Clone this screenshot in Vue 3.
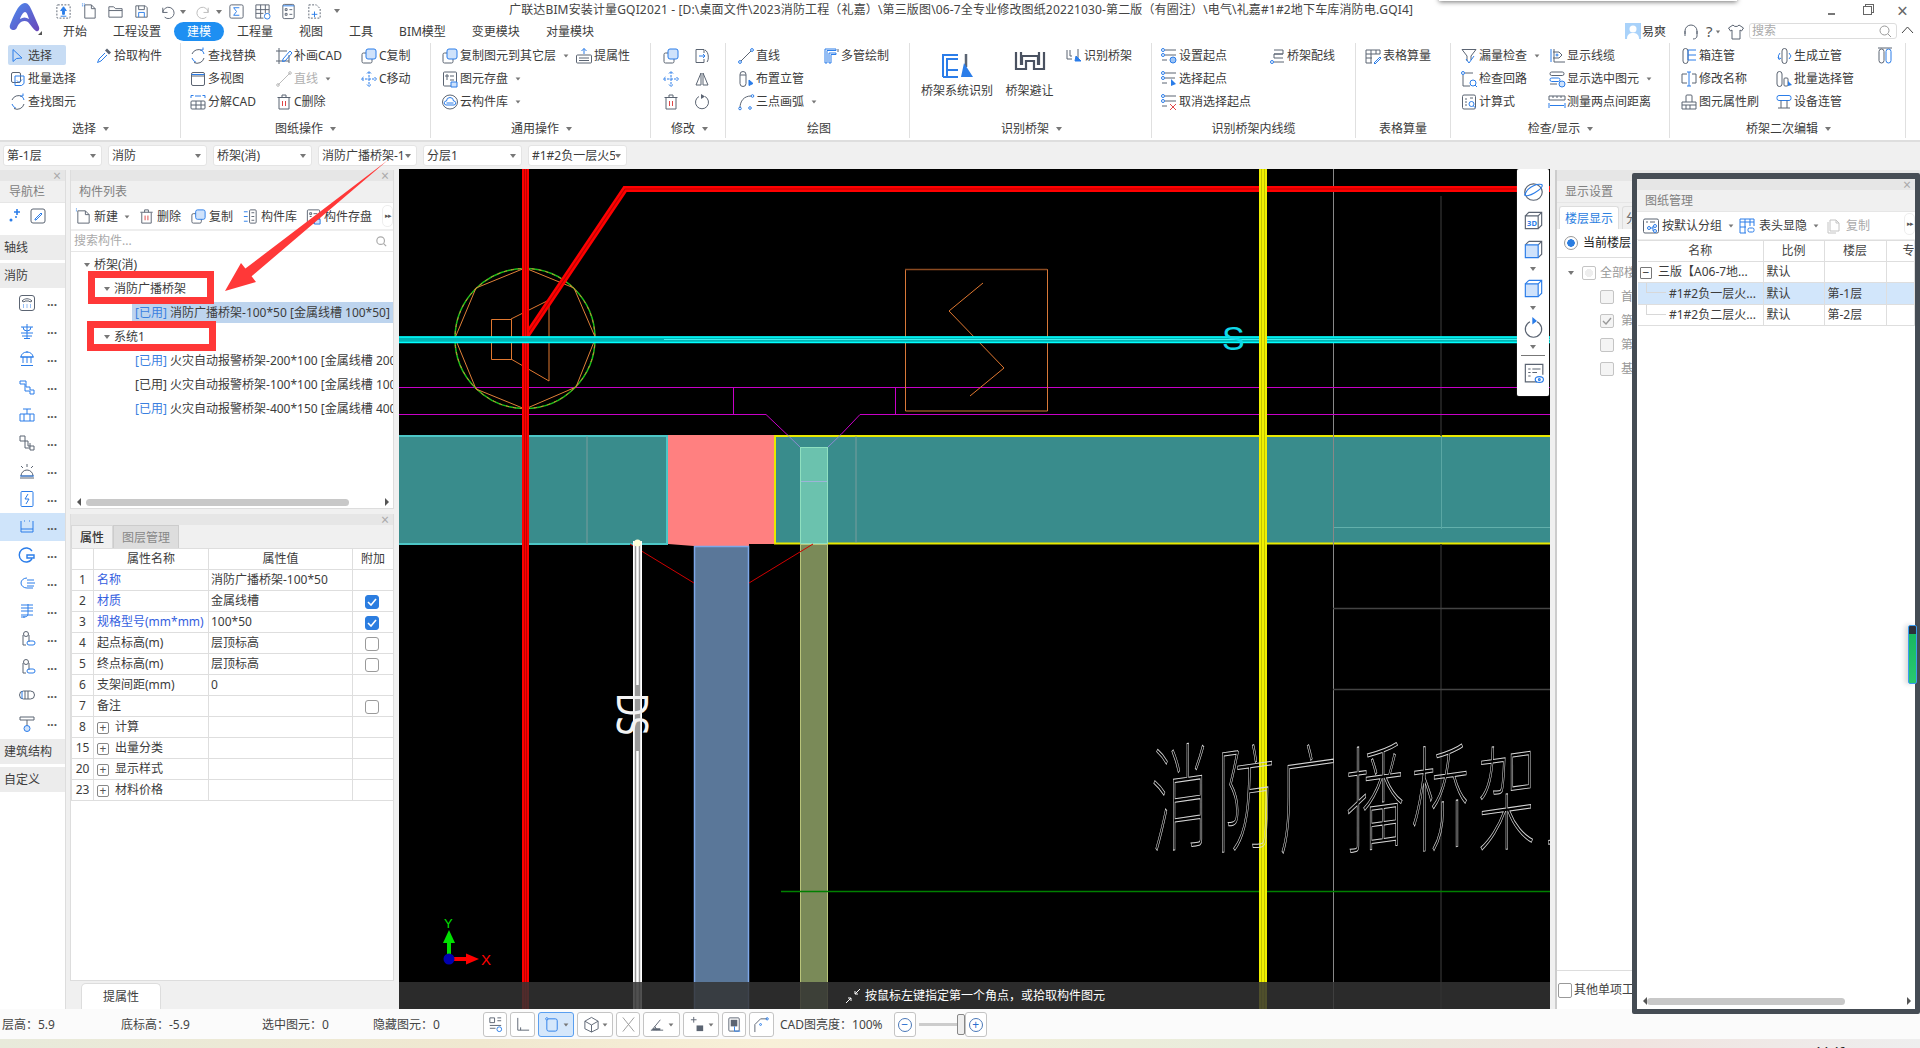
<script setup>
const b = 'stroke="#2b7de9"'
const r = 'stroke="#e04848"'
const lb = 'fill="#cfe2fb"'
const d = 'fill="#5b6472" stroke="none"'

const icons = {
  select: `<path ${b} d="M4 2.5v12l3.5-3 5.5-.5z"/>`,
  pick: `<path ${d} d="M12 1.5l4 4-2 2-4-4z"/><path ${b} d="M10 6l-6 6-1.5 3.5L6 14l6-6"/>`,
  batch: `<rect x="2.5" y="2.5" width="9" height="10" rx="1.5"/><path ${b} d="M6 6h9v7.5l-2.5 2H6z"/><path ${b} d="M8 10.5l2 2 3-3"/>`,
  find: `<path d="M13 3.5A7 7 0 0 0 3 7"/><path ${b} d="M3 11a7 7 0 0 0 4 4.3"/><path d="M5 15.5A7 7 0 0 0 15 11"/><path ${b} d="M15 7a7 7 0 0 0-2-3.5M11 3h3V.5"/>`,
  patch: `<path d="M1 4h11M4 1v16M1 14h13M14 8v8"/><path ${b} d="M8 12l7-8 2 2-7 8-2.500.5z"/>`,
  multi: `<rect x="2.5" y="2.5" width="13" height="13" rx="1.500"/><path d="M2.500 6h13"/><path ${b} d="M2.500 4.500h13"/>`,
  lineOff: `<path stroke="#bbb" d="M3 15L15 3"/><circle stroke="#bbb" cx="3" cy="15" r="1.300"/><circle stroke="#bbb" cx="15" cy="3" r="1.300"/>`,
  line: `<path d="M4 14L14 4"/><circle ${b} cx="3" cy="15" r="1.400"/><circle ${b} cx="15" cy="3" r="1.400"/>`,
  copyB: `<rect x="2" y="6" width="10" height="10" rx="1.500"/><rect ${b} ${lb} x="6" y="2" width="10" height="10" rx="2"/>`,
  move: `<path ${b} d="M9 1.500v15M1.500 9h15M7 3.500l2-2 2 2M7 14.500l2 2 2-2M3.500 7l-2 2 2 2M14.500 7l2 2-2 2" stroke-dasharray="2.500 1"/>`,
  explode: `<path ${b} d="M2 5V2.500h2.500M16 5V2.500h-2.500M6 3h6"/><rect x="2" y="8" width="14" height="8" rx="1"/><path d="M7 8v8M12 8v8M2 12h14"/>`,
  trash: `<path d="M4 5v11h10V5M2.500 4.500h13M7 4.500V2h4v2.500"/><path ${r} d="M7.500 8v5M10.500 8v5"/>`,
  save: `<rect x="2.500" y="2" width="13" height="14" rx="1"/><path d="M5 5h2v2H5zM9 6h4M5 9h2M9 10h4"/><path ${b} ${lb} d="M10 12h6v5h-6z"/>`,
  cloud: `<ellipse cx="9" cy="9" rx="7.500" ry="7"/><path ${b} d="M5 12a2 2 0 0 1 .500-4 3.500 3.500 0 0 1 7 0 2 2 0 0 1 .500 4zM5.500 10h7"/>`,
  lift: `<rect x="1.500" y="8" width="15" height="8" rx="1"/><path d="M4 11h10M4 13.500h10"/><path ${b} d="M9 7V1.500M6.500 4L9 1.500 11.500 4"/>`,
  mirror: `<path d="M8 3L3 15h5zM10 3l5 12h-5z"/>`,
  flip: `<path d="M3 2.500h8V6M3 2.500v13h8V12"/><path ${b} d="M6 9h6M10 7l2 2-2 2"/><path d="M12 3c4 2 4 10 2 12"/>`,
  turn: `<path d="M12 3.500a6.500 6.500 0 1 1-6 0"/><path ${d} d="M8 1l4 2.500L8 6z"/>`,
  riser: `<rect x="3" y="1.500" width="6" height="15" rx="3"/><path d="M3 5h6"/><path ${b} fill="#2b7de9" d="M12 10l4 3.500-4 2z"/>`,
  arc: `<path d="M3 15C3 8 7 3 14 3"/><circle ${b} cx="3" cy="15.500" r="1.300"/><circle ${b} cx="15.500" cy="3" r="1.300"/><circle ${b} cx="13" cy="15" r="1.300"/>`,
  multipipe: `<path ${b} d="M3 2h11v1.500H5V16H3zM7 6h7v1.500H9V16H7z"/><path d="M16 2v3"/>`,
  bridgeBig: `<path stroke="#2b7de9" stroke-width="2" d="M4 29V7h15M8 29V11h11M4 29h15M9 22h10"/><path stroke="#5b6472" stroke-width="2.500" d="M27 6v13"/><path fill="#2b7de9" stroke="none" d="M25 15l9 14H22z"/>`,
  avoidBig: `<path stroke="#4a5261" stroke-width="2.200" d="M4 4v17h10v-8h8v8h10V4M9 4v12h1v-8h16v8h1V4"/>`,
  recog: `<path d="M2 3v9h5M5 3v6h2"/><path d="M13 2v10"/><path ${b} fill="#2b7de9" d="M11 9l5 5h-6z"/>`,
  startSet: `<circle ${b} cx="3" cy="3" r="1.500"/><path d="M5 3h11M5 8h11M2 13h5"/><circle ${b} cx="3" cy="8" r="1.500"/><circle ${b} fill="#9cc3f5" cx="13" cy="13" r="3"/>`,
  startPick: `<circle ${b} cx="3" cy="3" r="1.500"/><path d="M5 3h11M5 8h10M2 13h5"/><circle ${b} cx="3" cy="8" r="1.500"/><path fill="#2b7de9" stroke="none" d="M11 9l5 5-5 2z"/>`,
  startOff: `<circle ${b} cx="3" cy="3" r="1.500"/><path d="M5 3h11M5 8h11M2 13h5"/><circle ${b} cx="3" cy="8" r="1.500"/><path ${r} d="M10 11l6 6M16 11l-6 6"/>`,
  wire: `<path d="M6 3h9v4H6M15 7H6v4h9"/><circle ${b} cx="4" cy="15" r="1.500"/><path d="M6 15h10"/>`,
  grid: `<path d="M2 3h14v4M2 3v13h6M2 7h14M2 11h6M7 3v13M12 3v4"/><path ${b} d="M10 16l6-6 1 1-6 6z"/>`,
  funnel: `<path d="M2 2.500h14L11 9v4"/><path d="M2 2.500L7 9v5"/><path ${b} d="M6 12l3 4 5-7"/>`,
  loop: `<circle ${b} cx="3" cy="3" r="1.500"/><path d="M5 3h8M3 5v11h7"/><circle ${b} cx="13" cy="13" r="3"/><path ${b} d="M15 15l2 2"/>`,
  calc: `<rect x="2.500" y="2" width="13" height="14" rx="1.500"/><path d="M5 6h2M5 9h2M5 12h2M10 5h3"/><circle ${b} cx="11.500" cy="11" r="2.500"/><path ${b} d="M13.500 13l2 2"/>`,
  wires: `<path ${b} d="M3 2v13"/><path d="M6 2v13h11M5 5h6l3 3-3 3H5"/><circle ${b} cx="9" cy="8" r="1"/>`,
  showSel: `<rect x="2" y="2" width="14" height="3.500" rx="1.700"/><rect ${b} x="2" y="8" width="10" height="3.500" rx="1.700"/><path d="M2 14h7"/><circle ${b} ${lb} cx="14" cy="14" r="3"/>`,
  measure: `<path d="M1 3h16v4H1zM5 3v2M9 3v2M13 3v2"/><path ${b} d="M1 10v5M17 10v5M2 12.500h14"/>`,
  box: `<rect x="3" y="1.500" width="5" height="15" rx="2.500"/><path ${b} d="M8 3h8M8 8h8M8 13h8M8 3v10"/>`,
  rename: `<path d="M7 4H2v9h5M12 4h4v9h-4"/><path ${b} d="M9 2v14M7 2h4M7 16h4"/>`,
  brush: `<path d="M6 9V3a1 1 0 0 1 1-1h4a1 1 0 0 1 1 1v6"/><path d="M2 9h14v7H2zM2 12h14M6 12v4M10 12v4"/>`,
  gen: `<rect x="7" y="1.500" width="5" height="15" rx="2.500"/><path ${b} d="M5 6a5 5 0 0 0-1 6M3 10l1 2.500 2-1.500"/><path ${b} d="M14 6l2 3-2 3"/>`,
  batchP: `<rect x="2" y="1.500" width="5" height="15" rx="2.500"/><rect x="9" y="8" width="4" height="8" rx="1"/><path fill="#2b7de9" stroke="none" d="M13 11l4 4-4 1z"/>`,
  equip: `<rect ${b} x="2" y="2.500" width="14" height="5" rx="2"/><path d="M6 7.500V15M12 7.500V15M3 15h12"/>`,
  pipe2: `<rect x="2" y="2" width="5" height="14" rx="2.500"/><rect ${b} x="9" y="2" width="5" height="14" rx="2.500"/><path d="M1 1h14"/>`,
  phone: `<rect x="1.500" y="1.500" width="15" height="15" rx="2.500"/><path d="M4 7c3-3 7-3 10 0l-2 1-1-1H7L6 8z"/><path ${b} d="M5 11h1M8.500 11h1M12 11h1M5 13h1M8.500 13h1M12 13h1"/>`,
  np1: `<path ${b} d="M3 5h12M9 2v14M5 5a4 4 0 0 0 8 0M3 11h12M4 14h10M6 16.500h6"/>`,
  np2: `<path ${b} d="M3 7a6 5 0 0 1 12 0zM2 7h14M5 7v6M13 7v6M9 7v6M3 15.500h12M9 1v2"/>`,
  np3: `<path ${b} d="M2 3h6v6h4v3h4v4h-4v-3H7V6H2z"/>`,
  np4: `<path ${b} d="M5 3h8M9 3v5M2 8h14v7H2zM6 8v7M12 8v7"/>`,
  np5: `<path d="M2 2h5v5h3v5h6v4h-4v-2H7V7H2z"/><path d="M12 9v5"/>`,
  np6: `<path d="M3 14a6 6 0 0 1 12 0zM2 16h14M9 2v3M3 4l2 2M15 4l-2 2"/><path ${b} d="M2 14h14"/>`,
  np7: `<rect ${b} x="3" y="1.500" width="12" height="15" rx="1"/><path ${b} d="M10 4L7 9h4l-3 5"/>`,
  np8: `<path ${b} d="M3 3v3M3 6v8h12V3M3 11h12M6 3h1M11 3h1"/>`,
  np9: `<path ${b} d="M14 5A7 7 0 1 0 14 13M9 9h7v3H9z" stroke-width="1.400"/>`,
  np10: `<path ${b} d="M9 4a6 5 0 1 0 0 10h6M9 6h7M9 9h8M9 12h7"/>`,
  np11: `<path ${b} d="M3 3h12M3 6h12M3 9h12M10 2v10c0 3-3 3-5 3M3 13h12M3 15h4"/>`,
  np12: `<circle cx="8" cy="4" r="2.500"/><path d="M5 5v10h3M11 5v7"/><rect ${b} x="9" y="11" width="8" height="4" rx="2"/>`,
  np14: `<rect x="1.500" y="5" width="15" height="8" rx="4"/><path d="M7 5v8M10 5v8"/><path ${b} d="M4 5v8"/>`,
  np15: `<path d="M2 3h14v3H2zM9 6v6"/><circle ${b} ${lb} cx="9" cy="14.500" r="3"/>`
}

const qa = [
  { k: `<rect stroke-dasharray="2 1.500" x="2" y="2" width="14" height="14" rx="1"/><path ${b} fill="#2b7de9" d="M9 4l3 4h-2v4H8V8H6z"/><path ${b} d="M6 14h6"/>` },
  { k: `<path d="M4 2h7l4 4v10H4zM11 2v4h4"/><path ${b} d="M1 1h3M1 3h3" stroke-dasharray="1 1"/>` },
  { k: `<path d="M2 15V4h5l2 2h7v9zM2 8h14"/>` },
  { k: `<path d="M3 3h10l2 2v10H3zM6 3v4h6V3"/><path ${b} d="M6 15v-5h6v5"/>` },
  { k: `<path d="M4 5v5h5M4 10a6 6 0 1 1 2 5"/>`, caret: true },
  { k: `<path stroke="#bbb" d="M14 5v5H9M14 10a6 6 0 1 0-2 5"/>`, caret: true, off: true, gap: true },
  { k: `<rect x="2" y="2" width="14" height="14" rx="1.500"/><path ${b} d="M12 5H6l3 4-3 4h6"/>`, gap2: true },
  { k: `<path d="M2 2h14v9M2 2v14h8M2 7h14M2 11h8M7 2v14M12 2v9"/><circle ${b} cx="14" cy="14" r="3"/>` },
  { k: `<rect x="3" y="1.500" width="12" height="15" rx="1.500"/><path ${b} d="M3 3h12"/><path d="M5.500 6h2v2h-2zM5.500 11h2v2h-2zM10 7h3M10 12h3"/>` },
  { k: `<path stroke-dasharray="2 1.500" d="M3 2h8l4 4v10H3z"/><path ${b} d="M6 12h6M9 9v6"/>` }
]

const sections = [
  { label: '选择', caret: true, w: 181, pad: 9, cols: [
    { w: 86, items: [{ ic: 'select', t: '选择', active: true }, { ic: 'batch', t: '批量选择' }, { ic: 'find', t: '查找图元' }] },
    { items: [{ ic: 'pick', t: '拾取构件' }] }
  ] },
  { label: '图纸操作', caret: true, w: 250, pad: 8, cols: [
    { w: 86, items: [{ ic: 'find', t: '查找替换' }, { ic: 'multi', t: '多视图' }, { ic: 'explode', t: '分解CAD' }] },
    { w: 85, items: [{ ic: 'patch', t: '补画CAD' }, { ic: 'lineOff', t: '直线', off: true, caret: true }, { ic: 'trash', t: 'C删除' }] },
    { items: [{ ic: 'copyB', t: 'C复制' }, { ic: 'move', t: 'C移动' }] }
  ] },
  { label: '通用操作', caret: true, w: 220, pad: 10, cols: [
    { w: 134, items: [{ ic: 'copyB', t: '复制图元到其它层', caret: true }, { ic: 'save', t: '图元存盘', caret: true }, { ic: 'cloud', t: '云构件库', caret: true }] },
    { items: [{ ic: 'lift', t: '提属性' }] }
  ] },
  { label: '修改', caret: true, w: 75, pad: 11, cols: [
    { w: 31, items: [{ ic: 'copyB' }, { ic: 'move' }, { ic: 'trash' }] },
    { items: [{ ic: 'flip' }, { ic: 'mirror' }, { ic: 'turn' }] }
  ] },
  { label: '绘图', w: 184, pad: 11, cols: [
    { w: 85, items: [{ ic: 'line', t: '直线' }, { ic: 'riser', t: '布置立管' }, { ic: 'arc', t: '三点画弧', caret: true }] },
    { items: [{ ic: 'multipipe', t: '多管绘制' }] }
  ] },
  { label: '识别桥架', caret: true, w: 242, pad: 10, cols: [
    { w: 74, big: { ic: 'bridgeBig', t: '桥架系统识别' } },
    { w: 71, big: { ic: 'avoidBig', t: '桥架避让' } },
    { items: [{ ic: 'recog', t: '识别桥架' }] }
  ] },
  { label: '识别桥架内线缆', w: 204, pad: 8, cols: [
    { w: 108, items: [{ ic: 'startSet', t: '设置起点' }, { ic: 'startPick', t: '选择起点' }, { ic: 'startOff', t: '取消选择起点' }] },
    { items: [{ ic: 'wire', t: '桥架配线' }] }
  ] },
  { label: '表格算量', w: 95, pad: 8, cols: [{ items: [{ ic: 'grid', t: '表格算量' }] }] },
  { label: '检查/显示', caret: true, w: 219, pad: 9, cols: [
    { w: 88, items: [{ ic: 'funnel', t: '漏量检查', caret: true }, { ic: 'loop', t: '检查回路' }, { ic: 'calc', t: '计算式' }] },
    { items: [{ ic: 'wires', t: '显示线缆' }, { ic: 'showSel', t: '显示选中图元', caret: true }, { ic: 'measure', t: '测量两点间距离' }] }
  ] },
  { label: '桥架二次编辑', caret: true, w: 236, pad: 10, cols: [
    { w: 95, items: [{ ic: 'box', t: '箱连管' }, { ic: 'rename', t: '修改名称' }, { ic: 'brush', t: '图元属性刷' }] },
    { w: 102, items: [{ ic: 'gen', t: '生成立管' }, { ic: 'batchP', t: '批量选择管' }, { ic: 'equip', t: '设备连管' }] },
    { items: [{ ic: 'pipe2' }] }
  ] }
]

const tabs = ['开始', '工程设置', '建模', '工程量', '视图', '工具', 'BIM模型', '变更模块', '对量模块']
const combos = ['第-1层', '消防', '桥架(消)', '消防广播桥架-1', '分层1', '#1#2负一层火5']

const navIcons = ['phone', 'np1', 'np2', 'np3', 'np4', 'np5', 'np6', 'np7', 'np8', 'np9', 'np10', 'np11', 'np12', 'np12', 'np14', 'np15']

const tools = [
  { ic: 'new', t: '新建', caret: true },
  { ic: 'trash', t: '删除' },
  { ic: 'copyB', t: '复制' },
  { ic: 'lib', t: '构件库' },
  { ic: 'save', t: '构件存盘' }
]
icons.new = `<path d="M3 3h8l4 4v9H3zM11 3v4h4"/><path ${b} d="M1 1h2M1 3h2" stroke-dasharray="1 1"/>`
icons.lib = `<rect x="8" y="2" width="7" height="14" rx="1"/><path d="M10 5h3M10 9h3M10 13h3"/><path ${b} d="M2 4h4M2 9h4M2 14h4"/>`
icons.group = `<rect x="1.500" y="2" width="15" height="14" rx="1.500"/><path d="M4 5h2M8 5h5"/><path ${b} d="M8 11h3M11 9v5"/><circle ${b} cx="7" cy="11" r="1.500"/><circle ${b} cx="13" cy="9" r="1.500"/><circle ${b} cx="13" cy="14" r="1.500"/>`
icons.head = `<path ${b} d="M2 2h14v3H2zM2 5v11h6M16 5v4M7 2v14M12 2v7M2 10h6"/><rect ${b} x="10" y="11" width="6" height="4" rx="1.500"/>`
icons.cp = `<path stroke="#c4c4c4" d="M3 5v11h8M5 3h6l3 3v8H5zM11 3v3h3"/>`
icons.globe = `<ellipse cx="9" cy="9.500" rx="7.500" ry="7"/><path ${b} d="M1.500 12C3 15 17 7 16.500 3.500 15.500 1.500 4 3.500 1.500 12z"/>`
icons.c3d = `<path d="M2 5h11v11H2zM2 5l3-3h11v11l-3 3M13 5l3-3"/><text x="3.500" y="13.500" font-size="6.500" font-weight="700" stroke="none" fill="#2b7de9" font-family="Noto Sans">3D</text>`
icons.cube = `<path d="M5 2h11v11l-3 3M13 5l3-3M5 2L2 5"/><path ${b} ${lb} d="M2 5h11v11H2z"/>`
icons.cubeB = `<path ${b} d="M5 2h11v11l-3 3M13 5l3-3M5 2L2 5"/><path ${b} ${lb} d="M2 5h11v11H2z"/>`
icons.rot = `<path d="M12 4a7 7 0 1 1-6 0"/><path fill="#2b7de9" stroke="none" d="M8 0l4 3.500-4 3z"/>`
icons.note = `<path d="M17 11V2H2v15h10M4.500 6h2M8 6h7M4.500 9h2M8 9h4M4.500 12h2"/><ellipse ${b} cx="14" cy="15" rx="3.500" ry="2.500"/><circle ${b} cx="14" cy="15" r=".800"/>`
icons.st1 = `<path d="M3 2h5v5H3zM11 2h4M11 5h4M3 10h12M3 13h6"/><circle ${b} cx="13" cy="14" r="2.500"/>`
icons.st2 = `<path d="M4 2v13h12"/><path d="M7 12v3"/>`
icons.st3 = `<rect ${b} x="3" y="3" width="11" height="13" rx="2"/><circle ${b} fill="#fff" cx="3" cy="3" r="1.200"/>`
icons.st4 = `<path d="M9 1.500l7 4v8l-7 3.500-7-3.500v-8zM2 5.500l7 4 7-4M9 9.500V17"/>`
icons.st5 = `<path stroke="#999" d="M3 1.500l12 15M15 1.500l-12 15"/>`
icons.st6 = `<path d="M3 15L12 4M2 15h13"/><path d="M8 15a7 7 0 0 0-2-4"/><path ${d} d="M4 13h8v2H4z"/>`
icons.st7 = `<path d="M2 4h6M5 1v6"/><path ${d} d="M8 10h7v6H8z"/>`
icons.st8 = `<rect x="3" y="2" width="11" height="14" rx="1"/><path ${d} d="M5 4h7v7H5z"/><path ${b} d="M9 11v5h6"/>`
icons.st9 = `<path d="M2 17V9l6-6h7"/><circle ${b} cx="15" cy="3" r="1.200"/><circle ${b} cx="8" cy="9" r="1"/>`

const statusBtns = [
  { ic: 'st1', w: 24 },
  { ic: 'st2', w: 25 },
  { ic: 'st3', w: 36, caret: true, on: true },
  { ic: 'st4', w: 36, caret: true },
  { ic: 'st5', w: 24 },
  { ic: 'st6', w: 37, caret: true },
  { ic: 'st7', w: 36, caret: true },
  { ic: 'st8', w: 24 },
  { ic: 'st9', w: 25 }
]

const treeRows = [
  { tag: true, text: '火灾自动报警桥架-200*100 [金属线槽 200*100]' },
  { tag: false, text: '火灾自动报警桥架-100*100 [金属线槽 100*100]' },
  { tag: true, text: '火灾自动报警桥架-400*150 [金属线槽 400*150]' }
]

const props = [
  { n: 1, name: '名称', val: '消防广播桥架-100*50', blue: true },
  { n: 2, name: '材质', val: '金属线槽', blue: true, chk: 1 },
  { n: 3, name: '规格型号(mm*mm)', val: '100*50', blue: true, chk: 1 },
  { n: 4, name: '起点标高(m)', val: '层顶标高', chk: 0 },
  { n: 5, name: '终点标高(m)', val: '层顶标高', chk: 0 },
  { n: 6, name: '支架间距(mm)', val: '0' },
  { n: 7, name: '备注', val: '', chk: 0 },
  { n: 8, name: '计算', val: '', plus: true },
  { n: 15, name: '出量分类', val: '', plus: true },
  { n: 20, name: '显示样式', val: '', plus: true },
  { n: 23, name: '材料价格', val: '', plus: true }
]

const viewTools = [
  { ic: 'globe' }, { ic: 'c3d' }, { ic: 'cube', caret: true }, { ic: 'cubeB', caret: true }, { ic: 'rot', caret: true, line: true }, { ic: 'note' }
]

const floors = [{ t: '首' }, { t: '第', on: true }, { t: '第' }, { t: '基' }]
const sheets = [
  { name: '#1#2负一层火...', scale: '默认', floor: '第-1层', sel: true },
  { name: '#1#2负二层火...', scale: '默认', floor: '第-2层' }
]

// CAD里的大字：每个字单独倾斜，基线保持水平
const bigText = [
  { c: '消', x: 1151 }, { c: '防', x: 1217 }, { c: '广', x: 1279 }, { c: '播', x: 1346 },
  { c: '桥', x: 1411 }, { c: '架', x: 1478 }, { c: '1', x: 1543 }
]
</script>

<template>
  <div class="app">
    <header class="top">
      <div class="logo">
        <svg width="34" height="32" viewBox="0 0 34 32">
          <defs>
            <linearGradient id="lg" x1="0" y1="0" x2="1" y2="1">
              <stop offset="0" stop-color="#4a8df0" />
              <stop offset="1" stop-color="#6b45b8" />
            </linearGradient>
          </defs>
          <path fill="url(#lg)" d="M17 1c3 0 5 3 7 8l7 16c1 3-1 5-3 4-3-2-5-6-8-9-3-2-7-1-9 2-2 2-2 6-5 6-3 0-5-2-4-5C5 16 10 1 17 1zm0 9c-2 0-4 4-5 7 3-2 6-2 9 0-1-3-2-7-4-7z" />
        </svg>
        <i class="logo-corner"></i>
      </div>
      <div class="top-rows">
        <div class="title-row">
          <div v-for="(q, i) in qa" :key="i" class="qa" :class="{ gap: q.gap, gap2: q.gap2 }">
            <svg class="ic" viewBox="0 0 18 18" v-html="q.k"></svg>
            <i v-if="q.caret" class="caret qa-caret"></i>
          </div>
          <i class="caret qa-more"></i>
          <div class="win-btns">
            <span class="win-min"></span>
            <span class="win-res"></span>
            <span class="win-x">×</span>
          </div>
        </div>
        <div class="tab-row">
          <span v-for="t in tabs" :key="t" class="tab" :class="{ on: t === '建模' }">{{ t }}</span>
          <div class="user">
            <span class="avatar">
              <svg width="16" height="16" viewBox="0 0 16 16"><rect width="16" height="16" fill="#a9d2fa" /><circle cx="8" cy="6" r="3.500" fill="#fff" /><path d="M2 16c0-5 3-6 6-6s6 1 6 6z" fill="#fff" /></svg>
            </span>
            <span class="user-name">易爽</span>
            <svg class="ic user-ic" viewBox="0 0 18 18"><path d="M3 11V8a6 6 0 0 1 12 0v3M3 8v5M15 8v5M15 13c0 2-2 3-4 3" /></svg>
            <span class="help">?</span>
            <i class="caret help-caret"></i>
            <svg class="ic shirt" viewBox="0 0 18 18"><path d="M6 2L1.500 5 3.500 8 5 7v9h8V7l1.500 1 2-3L12 2c-1 2-5 2-6 0z" /></svg>
            <div class="top-search">
              <span>搜索</span>
              <svg width="13" height="13" viewBox="0 0 13 13" fill="none" stroke="#999"><circle cx="5.500" cy="5.500" r="4.500" /><path d="M9 9l3 3" /></svg>
            </div>
            <svg class="chev" width="13" height="8" viewBox="0 0 13 8" fill="none" stroke="#444"><path d="M1 7l5.500-6L12 7" /></svg>
          </div>
        </div>
      </div>
      <div class="app-title">广联达BIM安装计量GQI2021 - [D:\桌面文件\2023消防工程（礼嘉）\第三版图\06-7全专业修改图纸20221030-第二版（有圈注）\电气\礼嘉#1#2地下车库消防电.GQI4]</div>
      <div class="top-shadow"></div>
    </header>

    <section class="ribbon">
      <div v-for="s in sections" :key="s.label" class="rsec" :style="{ width: s.w + 'px', paddingLeft: s.pad + 'px' }">
        <div class="rcols">
          <div v-for="(c, ci) in s.cols" :key="ci" class="rcol" :style="c.w ? { width: c.w + 'px' } : null">
            <div v-if="c.big" class="rbig">
              <svg class="ic big-ic" viewBox="0 0 36 32" v-html="icons[c.big.ic]"></svg>
              <span>{{ c.big.t }}</span>
            </div>
            <template v-else>
              <div v-for="it in c.items" :key="it.ic + it.t" class="ritem" :class="{ active: it.active, off: it.off }">
                <svg class="ic" viewBox="0 0 18 18" v-html="icons[it.ic]"></svg>
                <span v-if="it.t">{{ it.t }}</span>
                <i v-if="it.caret" class="caret r-caret"></i>
              </div>
            </template>
          </div>
        </div>
        <div class="rlabel">{{ s.label }}<i v-if="s.caret" class="caret l-caret"></i></div>
      </div>
    </section>

    <div class="combos">
      <div v-for="c in combos" :key="c" class="combo">
        <span>{{ c }}</span>
        <i class="caret"></i>
      </div>
    </div>

    <main class="main">
      <aside class="nav">
        <div class="p-close"><span>×</span></div>
        <div class="p-title">导航栏</div>
        <div class="nav-tools">
          <svg class="ic" viewBox="0 0 18 18"><path stroke="#2b7de9" stroke-width="1.600" d="M10 2v6M7 5h6" /><circle cx="4" cy="13" r="1.500" fill="#2b7de9" stroke="none" /><circle cx="9" cy="10" r="1" fill="#2b7de9" stroke="none" /></svg>
          <svg class="ic" viewBox="0 0 18 18"><rect x="2" y="2" width="14" height="14" rx="2" /><path stroke="#2b7de9" d="M6 12l6-6 1 1-6 6H6z" /></svg>
        </div>
        <div class="nav-group first">轴线</div>
        <div class="nav-group mid">消防</div>
        <div v-for="(n, i) in navIcons" :key="i" class="nav-row" :class="{ on: i === 8 }">
          <svg class="ic" viewBox="0 0 18 18" v-html="icons[n]"></svg>
          <span>...</span>
        </div>
        <div class="nav-group low">建筑结构</div>
        <div class="nav-group">自定义</div>
      </aside>

      <div class="left">
        <div class="panel comp">
          <div class="p-close"><span>×</span></div>
          <div class="p-title">构件列表</div>
          <div class="comp-tools">
            <div v-for="t in tools" :key="t.t" class="ct">
              <svg class="ic" viewBox="0 0 18 18" v-html="icons[t.ic]"></svg>
              <span>{{ t.t }}</span>
              <i v-if="t.caret" class="caret"></i>
            </div>
            <span class="more">▸▸</span>
          </div>
          <div class="comp-search">
            <span>搜索构件...</span>
            <svg width="11" height="11" viewBox="0 0 13 13" fill="none" stroke="#aaa" stroke-width="1.400"><circle cx="5.500" cy="5.500" r="4.500" /><path d="M9 9l3 3" /></svg>
          </div>
          <div class="tree">
            <div class="tr lv0"><i class="tri"></i>桥架(消)</div>
            <div class="tr lv1"><i class="tri"></i>消防广播桥架</div>
            <div class="tr lv2 sel"><span class="tag">[已用]</span> 消防广播桥架-100*50 [金属线槽 100*50]</div>
            <div class="tr lv1"><i class="tri"></i>系统1</div>
            <div v-for="r in treeRows" :key="r.text" class="tr lv2">
              <span :class="{ tag: r.tag }">[已用]</span> {{ r.text }}
            </div>
          </div>
          <div class="hbar">
            <i class="arr-l"></i>
            <div class="thumb"></div>
            <i class="arr-r"></i>
          </div>
        </div>

        <div class="panel propp">
          <div class="p-close"><span>×</span></div>
          <div class="ptabs">
            <span class="ptab on">属性</span>
            <span class="ptab">图层管理</span>
          </div>
          <table class="ptable">
            <colgroup>
              <col class="c0" /><col class="c1" /><col class="c2" /><col class="c3" />
            </colgroup>
            <thead>
              <tr><th></th><th>属性名称</th><th>属性值</th><th>附加</th></tr>
            </thead>
            <tbody>
              <tr v-for="p in props" :key="p.n">
                <td class="num">{{ p.n }}</td>
                <td class="nm" :class="{ blue: p.blue }">
                  <span v-if="p.plus" class="plus">+</span>{{ p.name }}
                </td>
                <td class="val">{{ p.val }}</td>
                <td class="chk">
                  <span v-if="p.chk === 1" class="cb on">
                    <svg width="10" height="8" viewBox="0 0 10 8" fill="none" stroke="#fff" stroke-width="1.600"><path d="M1 4l3 3 5-6" /></svg>
                  </span>
                  <span v-else-if="p.chk === 0" class="cb"></span>
                </td>
              </tr>
            </tbody>
          </table>
        </div>

        <div class="pbtn-row"><button class="pbtn">提属性</button></div>
      </div>

      <div class="cad">
        <svg class="cad-svg" viewBox="399 169 1151 840" width="1151" height="840">
          <!-- 桥架块 -->
          <rect x="398" y="436" width="269" height="108" fill="#398c8c" stroke="#4cc6c6" stroke-width="2" />
          <path d="M587 436v108" stroke="#7b9d9d" />
          <path d="M668 435h107v109h-26v2h-55l-26-2z" fill="#ff8080" />
          <rect x="775" y="436" width="790" height="107.500" fill="#398c8c" stroke="#e8e800" stroke-width="2" />
          <path d="M856 436v107" stroke="#7b9d9d" />
          <path d="M1333 527.500h217" stroke="#63b0ac" />
          <path d="M787 434.500l13 12.500M841 434.500l-13 12.500" stroke="#8a8ad0" />
          <rect x="800.500" y="447.500" width="27" height="96" fill="#6bc2ae" stroke="#8fe0c0" />
          <path d="M801 481.500h26" stroke="#9cb4d8" />
          <rect x="800.500" y="544.500" width="27" height="470" fill="#7a8a58" stroke="#b9c47a" />
          <rect x="694.500" y="546.500" width="54" height="470" fill="#5a7799" stroke="#7da7e8" stroke-width="1.500" />
          <path d="M630 544l64 39M749 583l64-39" stroke="#d00000" />
          <!-- 线 -->
          <path d="M1333.500 169v840" stroke="#888" />
          <path d="M1441 196v240M1441 544v465" stroke="#2a2a2a" stroke-width="1.500" />
          <path d="M1441.500 436v60M1441.500 494v35" stroke="#5aa7a4" />
          <path d="M1333 608.500h217M1333 689.500h217" stroke="#444" stroke-width="1.500" />
          <path d="M781 891.500h769" stroke="#008000" stroke-width="1.500" />
          <!-- 紫线 -->
          <path d="M399 387.500h1151M399 414.500h367l21 20M841 434.500l19-20h690M733.500 387v27M895.500 387v27" fill="none" stroke="#c800c8" />
          <!-- 广播符号 -->
          <circle cx="525" cy="338.500" r="70" fill="none" stroke="#18c018" stroke-width="1.500" />
          <circle cx="525" cy="338.500" r="70" fill="none" stroke="#e08038" stroke-dasharray="3 4" />
          <path d="M525 268l49 20 21.500 50-19.500 49-51 22-49-20-21-51 21-50z" fill="none" stroke="#e08038" />
          <path d="M491.500 319.500h20v40h-20zM511 319l38-19v81l-38-22" fill="none" stroke="#e07830" />
          <path d="M905.500 269.500h142v141.500h-142z" fill="none" stroke="#d87838" />
          <path d="M905 269.500h142" stroke="#8a4a20" stroke-width="1.500" />
          <path d="M983 283l-34 28 55 57-34 28" fill="none" stroke="#e07830" />
          <!-- 红色桥架 -->
          <path d="M525 338L625 189H1550" fill="none" stroke="#f00" stroke-width="6" />
          <path d="M525 338L625 189H1550" fill="none" stroke="#b80000" stroke-width="1.200" />
          <rect x="522" y="169" width="7" height="840" fill="#f00" />
          <path d="M524.500 169v840M526.500 169v840" stroke="#c00000" />
          <!-- 青色桥架 -->
          <rect x="399" y="336.500" width="1151" height="6.500" fill="#00b4b4" />
          <path d="M399 337h1151M399 342.500h1151" stroke="#00ffff" stroke-width="1.500" />
          <path d="M664 339.500h886" stroke="#40f0f0" />
          <!-- 黄色 -->
          <rect x="1259" y="169" width="8" height="840" fill="#f0f000" />
          <path d="M1261.500 169v840M1264.500 169v840" stroke="#c4c400" />
          <!-- 白杆 -->
          <rect x="633" y="541" width="9" height="468" fill="#fff" />
          <path d="M635.500 541v468M639.500 541v468" stroke="#999" stroke-width="1.500" />
          <path d="M637.500 685v66" stroke="#999" stroke-width="5" />
          <circle cx="637.500" cy="543" r="3.500" fill="#ffffd8" />
          <!-- 文字 -->
          <text class="cad-s" x="1222" y="350">S</text>
          <text class="cad-ds" transform="translate(617 693) rotate(90) scale(.72 1)">DS</text>
          <text v-for="t in bigText" :key="t.c" class="cad-big" :transform="`translate(${t.x} 845) skewY(-8) scale(.5 1)`">{{ t.c }}</text>
          <!-- 坐标轴 -->
          <path d="M449 959v-20" stroke="#00e000" stroke-width="4" />
          <path d="M449 930l-6 13h12z" fill="#00e000" />
          <path d="M449 959h20" stroke="#f00" stroke-width="4" />
          <path d="M479 959l-13-5.500v11z" fill="#f00" />
          <circle cx="449" cy="959" r="5.500" fill="#0000b0" />
          <text class="axis ay" x="444" y="928">Y</text>
          <text class="axis ax" x="481" y="965">X</text>
        </svg>
        <div class="view-tools">
          <template v-for="v in viewTools" :key="v.ic">
            <svg class="ic" viewBox="0 0 18 18" v-html="icons[v.ic]"></svg>
            <i v-if="v.caret" class="caret"></i>
            <hr v-if="v.line" />
          </template>
        </div>
        <div class="hint">
          <svg width="16" height="16" viewBox="0 0 16 16" fill="none" stroke="#fff"><path d="M1 15l5-5M3 10h3v3M15 1l-5 5M13 6h-3V3" /></svg>
          <span>按鼠标左键指定第一个角点，或拾取构件图元</span>
        </div>
      </div>

      <div class="disp">
        <div class="p-close"></div>
        <div class="p-title">显示设置</div>
        <div class="disp-tabs"><span class="dt on">楼层显示</span><span class="dt">分</span></div>
        <div class="cur"><span class="radio"></span>当前楼层</div>
        <div class="disp-tree">
          <div class="all"><i class="tri"></i><span class="box half"></span><span>全部楼</span></div>
          <div v-for="(f, i) in floors" :key="i" class="fl">
            <span class="box">
              <svg v-if="f.on" width="10" height="8" viewBox="0 0 10 8" fill="none" stroke="#999" stroke-width="1.400"><path d="M1 4l3 3 5-6" /></svg>
            </span>
            <span>{{ f.t }}</span>
          </div>
        </div>
        <div class="disp-foot"><span class="box2"></span>其他单项工</div>
      </div>
    </main>

    <footer class="status">
      <span class="st s1">层高：5.9</span>
      <span class="st s2">底标高：-5.9</span>
      <span class="st s3">选中图元：0</span>
      <span class="st s4">隐藏图元：0</span>
      <div class="st-btns">
        <div v-for="s in statusBtns" :key="s.ic" class="sbtn" :class="{ on: s.on }" :style="{ width: s.w + 'px' }">
          <svg class="ic" viewBox="0 0 18 18" v-html="icons[s.ic]"></svg>
          <i v-if="s.caret" class="caret"></i>
        </div>
        <span class="bright">CAD图亮度：100%</span>
        <div class="sbtn round"><span class="sym">−</span></div>
        <div class="slider"><i></i></div>
        <div class="sbtn round"><span class="sym">+</span></div>
      </div>
    </footer>
    <div class="wall"><span>14:46</span></div>

    <!-- 构件列表上的红框和箭头 -->
    <div class="mark m1"></div>
    <div class="mark m2"></div>
    <svg class="mark-arrow" width="400" height="320" viewBox="0 0 400 320">
      <path d="M225 291l31-9-4.400-5.700L388 160l-142.600 108.500-4.400-5.500z" fill="#ff3838" />
    </svg>

    <!-- 浮动窗口：图纸管理 -->
    <div class="sheetwin">
      <div class="p-close"><span>×</span></div>
      <div class="p-title">图纸管理</div>
      <div class="sw-tools">
        <svg class="ic" viewBox="0 0 18 18" v-html="icons.group"></svg>
        <span class="sw-t1">按默认分组</span><i class="caret sw-c1"></i>
        <svg class="ic" viewBox="0 0 18 18" v-html="icons.head"></svg>
        <span class="sw-t2">表头显隐</span><i class="caret sw-c2"></i>
        <svg class="ic" viewBox="0 0 18 18" v-html="icons.cp"></svg>
        <span class="sw-t3">复制</span>
        <span class="more sw-more">▸▸</span>
      </div>
      <table class="stable">
        <colgroup><col class="a" /><col class="b" /><col class="c" /><col /></colgroup>
        <thead><tr><th>名称</th><th>比例</th><th>楼层</th><th class="clip">专</th></tr></thead>
        <tbody>
          <tr>
            <td class="root"><span class="minus">−</span>三版【A06-7地...</td>
            <td>默认</td><td></td><td></td>
          </tr>
          <tr v-for="(s, i) in sheets" :key="s.name" :class="{ sel: s.sel }">
            <td class="child"><i class="tl" :class="{ first: i === 0 }"></i>{{ s.name }}</td>
            <td>{{ s.scale }}</td><td>{{ s.floor }}</td><td></td>
          </tr>
        </tbody>
      </table>
      <div class="hbar sw-bar">
        <i class="arr-l"></i>
        <div class="thumb"></div>
        <i class="arr-r"></i>
      </div>
    </div>
    <div class="grip"></div>
  </div>
</template>

<style>
html, body { margin: 0; background: #f0f0f0; }
</style>

<style scoped>
.app {
  position: relative;
  width: 1920px;
  height: 1048px;
  overflow: hidden;
  display: flex;
  flex-direction: column;
  background: #f0f0f0;
  font-family: "Noto Sans", "Noto Sans CJK SC", sans-serif;
  font-size: 12px;
  line-height: 16px;
  color: #3c3c3c;
}
.ic { width: 18px; height: 18px; flex: none; fill: none; stroke: #5b6472; stroke-width: 1; }
i { display: block; font-style: normal; }
.caret {
  width: 0;
  height: 0;
  flex: none;
  border-left: 3.5px solid transparent;
  border-right: 3.5px solid transparent;
  border-top: 4px solid #777;
}

.top { position: relative; display: flex; height: 41px; background: #fff; }
.logo { position: relative; width: 50px; flex: none; padding: 2px 0 0 8px; box-sizing: border-box; }
.logo-corner { position: absolute; left: 38px; top: 31px; border-left: 4px solid transparent; border-bottom: 4px solid #555; }
.top-rows { flex: 1; display: flex; flex-direction: column; }
.title-row { height: 22px; display: flex; align-items: center; }
.qa { position: relative; width: 26px; display: flex; justify-content: center; }
.qa .ic { width: 17px; height: 17px; }
.qa.gap { margin-left: 10px; }
.qa.gap2 { margin-left: 7px; }
.qa-caret { position: absolute; left: 26px; top: 7px; }
.qa-more { margin-left: 7px; }
.win-btns { margin-left: auto; display: flex; align-items: center; width: 103px; height: 20px; position: relative; }
.win-min { position: absolute; left: 11px; top: 12px; width: 7px; height: 2px; background: #777; }
.win-res { position: absolute; left: 46px; top: 5px; width: 7px; height: 7px; border: 1px solid #666; box-shadow: 2px -2px 0 -1px #fff, 2px -2px 0 0 #666; }
.win-x { position: absolute; left: 80px; top: 0; font-size: 19px; line-height: 20px; color: #666; }
.tab-row { height: 19px; display: flex; align-items: center; position: relative; }
.tab { padding: 0 13px; height: 19px; line-height: 19px; }
.tab.on { background: #1e8ff2; color: #fff; border-radius: 10px; }
.user { position: absolute; left: 1575px; top: 0; width: 295px; height: 19px; }
.avatar { position: absolute; left: 0; top: 1px; width: 16px; height: 16px; }
.user-name { position: absolute; left: 17px; top: 2px; }
.user-ic { position: absolute; left: 57px; top: 1px; }
.help { position: absolute; left: 81px; top: 0; font-size: 15px; line-height: 19px; color: #555; }
.help-caret { position: absolute; left: 90px; top: 8px; transform: scale(.7); }
.shirt { position: absolute; left: 102px; top: 1px; }
.top-search {
  position: absolute;
  left: 124px;
  top: 1px;
  width: 148px;
  height: 16px;
  border: 1px solid #ddd;
  border-radius: 3px;
  box-sizing: border-box;
  display: flex;
  align-items: center;
  justify-content: space-between;
  padding: 0 4px 0 2px;
  color: #aaa;
}
.chev { position: absolute; left: 276px; top: 4px; }
.app-title { position: absolute; left: 0; right: 0; top: 2px; text-align: center; pointer-events: none; white-space: nowrap; color: #444; letter-spacing: .15px; padding-left: 2px; box-sizing: border-box; }
.top-shadow { position: absolute; left: 1439px; top: -6px; width: 298px; height: 7px; background: #fff; box-shadow: 0 1px 5px rgba(0, 0, 0, .55); }

.ribbon { display: flex; height: 101px; box-sizing: border-box; padding-top: 2px; background: #fff; border-bottom: 2px solid #dedede; }
.rsec { height: 95px; box-sizing: border-box; border-right: 1px solid #e0e0e0; display: flex; flex-direction: column; padding-top: 1px; flex: none; }
.rcols { display: flex; height: 69px; }
.rcol { flex: none; }
.ritem { position: relative; height: 23px; display: flex; align-items: center; gap: 1px; white-space: nowrap; z-index: 1; }
.ritem.active::before { content: ""; position: absolute; left: -1px; top: 1px; width: 58px; height: 20px; background: #c7dcf4; border-radius: 2px; z-index: -1; }
.ritem.off { color: #b0b0b0; }
.r-caret { margin-left: 6px; transform: scale(.8); }
.rbig { display: flex; flex-direction: column; align-items: center; padding-top: 4px; white-space: nowrap; }
.big-ic { width: 36px; height: 32px; margin-bottom: 3px; }
.rlabel { margin-top: 7px; height: 18px; line-height: 18px; display: flex; align-items: center; justify-content: center; gap: 7px; margin-left: -8px; }

.combos { height: 26px; display: flex; padding: 3px 0 0 3px; box-sizing: border-box; background: #f0f0f0; gap: 6px; }
.combo {
  width: 99px;
  height: 21px;
  box-sizing: border-box;
  background: #fff;
  border: 1px solid #e4e4e4;
  border-radius: 3px;
  display: flex;
  align-items: center;
  padding: 0 5px 0 3px;
  overflow: hidden;
  white-space: nowrap;
}
.combo span { flex: 1; overflow: hidden; }

.main { height: 841px; display: flex; flex: none; }
.p-close { height: 11px; background: #e6e6e6; text-align: right; padding-right: 4px; font-size: 14px; line-height: 11px; color: #aaa; }
.p-title { height: 22px; line-height: 22px; padding-left: 8px; color: #808080; background: #f0f0f0; border-bottom: 1px solid #e6e6e6; box-sizing: border-box; }

.nav { width: 65px; flex: none; margin-top: 2px; background: #fff; border-right: 1px solid #ddd; box-sizing: content-box; height: 839px; margin-right: 4px; }
.nav .p-title { padding-left: 9px; }
.nav-tools { height: 25px; display: flex; align-items: center; gap: 4px; padding-left: 7px; background: #fff; }
.nav-group { height: 25px; line-height: 25px; background: #ececec; padding-left: 4px; margin-bottom: 3px; }
.nav-group.first { margin-top: 7px; }
.nav-group.mid { margin-bottom: 1px; }
.nav-group.low { margin-top: 2px; }
.nav-row { height: 28px; display: flex; align-items: center; padding-left: 18px; gap: 11px; color: #555; }
.nav-row.on { background: #cfe4fa; }
.nav-row span { line-height: 18px; height: 20px; font-weight: 700; }

.left { width: 324px; flex: none; margin-top: 2px; display: flex; flex-direction: column; margin-right: 5px; }
.panel { background: #fff; border: 1px solid #ddd; border-top: 0; border-left: 1px solid #ddd; box-sizing: border-box; position: relative; }
.comp { height: 339px; }
.comp-tools { height: 28px; display: flex; align-items: center; padding: 1px 0 0 4px; border-bottom: 2px solid #eee; box-sizing: border-box; }
.ct { display: flex; align-items: center; gap: 2px; margin-right: 12px; white-space: nowrap; }
.ct .ic { width: 17px; height: 17px; }
.ct .caret { margin-left: 4px; transform: scale(.8); }
.ct:nth-child(2) { margin-left: -4px; margin-right: 9px; }
.ct:nth-child(3) { margin-right: 9px; }
.ct:nth-child(4) { margin-right: 8px; }
.more { position: absolute; right: 0; top: 35px; width: 11px; height: 22px; border: 1px solid #eee; border-radius: 5px; font-size: 7px; line-height: 20px; text-align: center; letter-spacing: -1px; color: #555; box-sizing: border-box; background: #fff; }
.comp-search { height: 20px; display: flex; align-items: center; justify-content: space-between; padding: 0 6px 0 3px; color: #aaa; border-bottom: 1px solid #e6e6e6; }
.tree { height: 244px; padding-top: 1px; box-sizing: border-box; overflow: hidden; }
.tr { height: 24px; line-height: 24px; white-space: nowrap; display: flex; align-items: center; overflow: hidden; }
.lv0 { padding-left: 13px; }
.lv1 { padding-left: 33px; }
.lv2 { margin-left: 61px; padding-left: 3px; white-space: pre; display: block; }
.sel { height: 21px; line-height: 21px; background: #bdd4ee; margin-top: 1px; margin-bottom: 2px; }
.tag { color: #3a80e0; }
.tri { width: 0; height: 0; margin-right: 4px; border-left: 3.5px solid transparent; border-right: 3.5px solid transparent; border-top: 4px solid #777; }
.hbar { position: relative; height: 12px; }
.thumb { position: absolute; left: 15px; width: 263px; top: 3px; height: 7px; border-radius: 4px; background: #c8c8c8; }
.arr-l, .arr-r { position: absolute; top: 2px; width: 0; height: 0; border-top: 4px solid transparent; border-bottom: 4px solid transparent; }
.arr-l { left: 6px; border-right: 4px solid #555; }
.arr-r { right: 4px; border-left: 4px solid #555; }

.propp { margin-top: 5px; height: 467px; }
.ptabs { height: 23px; display: flex; background: #f0f0f0; }
.ptab { padding: 0 8px; line-height: 23px; background: #ddd; color: #888; border: 1px solid #ccc; border-bottom: 0; box-sizing: border-box; }
.ptab.on { background: #f0f0f0; color: #333; border-color: #d8d8d8; font-weight: 500; }
.ptable, .stable { border-collapse: collapse; table-layout: fixed; }
.ptable { width: 323px; }
.c0 { width: 22px; }
.c1 { width: 115px; }
.c2 { width: 144px; }
.ptable th, .ptable td, .stable th, .stable td {
  height: 20px;
  padding: 0;
  border: 1px solid #dedede;
  font-weight: 400;
  white-space: nowrap;
  overflow: hidden;
}
.ptable td.nm { padding-left: 3px; }
.ptable td.val { padding-left: 2px; }
.blue { color: #3560e0; }
.num { text-align: center; }
.chk { text-align: center; }
.cb { display: inline-flex; align-items: center; justify-content: center; width: 14px; height: 14px; box-sizing: border-box; border: 1px solid #9a9a9a; border-radius: 3px; vertical-align: middle; margin-left: -2px; }
.cb.on { background: #2b7de0; border-color: #2b7de0; }
.plus { display: inline-block; width: 12px; height: 12px; line-height: 10px; text-align: center; border: 1px solid #888; border-radius: 2px; box-sizing: border-box; margin-right: 6px; color: #555; vertical-align: -1px; }
.pbtn-row { padding: 2px 0 0 11px; }
.pbtn { width: 80px; height: 26px; padding: 0; background: #fff; border: 1px solid #ddd; border-bottom: 0; border-radius: 5px 5px 0 0; font: inherit; color: #3c3c3c; }

.cad { position: relative; width: 1151px; height: 840px; margin-top: 1px; flex: none; background: #000; overflow: hidden; }
.cad-svg { display: block; }
.cad-s { font: 400 34px "Liberation Sans", sans-serif; fill: #10d8e8; }
.cad-ds { font: 400 42px "DejaVu Sans", sans-serif; fill: #f4f4f4; }
.cad-big { font: 100 116px "Noto Sans CJK SC", sans-serif; fill: none; stroke: #d8d8d8; stroke-width: 1; }
.axis { font: 400 13px "Liberation Sans", sans-serif; }
.ay { fill: #00e000; }
.ax { fill: #f00; font-size: 15px; }
.view-tools { position: absolute; left: 1118px; top: 0; width: 32px; height: 227px; box-sizing: border-box; background: #fff; border-radius: 2px; display: flex; flex-direction: column; align-items: center; padding-top: 12px; box-shadow: 0 0 1px #aaa; }
.view-tools .ic { width: 21px; height: 21px; margin-bottom: 8px; }
.view-tools .caret { margin: -1px 0 7px; }
.view-tools hr { width: 24px; margin: -1px 0 6px; border: 0; border-top: 1px solid #777; }
.hint { position: absolute; left: 0; right: 0; bottom: 0; height: 27px; background: rgba(51, 51, 51, .85); display: flex; align-items: center; justify-content: center; color: #fff; gap: 4px; padding-left: 1px; box-sizing: border-box; }

.disp { flex: none; width: 365px; margin-left: 5px; margin-top: 2px; height: 839px; background: #fff; border-left: 2px solid #ccc; box-sizing: border-box; position: relative; }
.disp-tabs { display: flex; height: 26px; padding: 3px 0 0 2px; background: #f0f0f0; gap: 3px; box-sizing: border-box; }
.dt { padding: 0 3px; line-height: 23px; background: #f0f0f0; border: 1px solid #ddd; border-bottom: 0; border-radius: 3px 3px 0 0; color: #666; }
.dt.on { width: 60px; text-align: center; background: #fff; color: #2b80e0; padding: 0; box-sizing: border-box; }
.cur { height: 29px; display: flex; align-items: center; padding-left: 7px; gap: 5px; border-bottom: 1px solid #ddd; color: #222; box-sizing: border-box; }
.radio { width: 14px; height: 14px; border-radius: 50%; border: 1px solid #999; box-sizing: border-box; background: radial-gradient(circle, #2b7de0 3.5px, #fff 4px); }
.all { display: flex; align-items: center; height: 24px; padding-left: 11px; margin-top: 3px; gap: 4px; color: #999; }
.box { width: 14px; height: 14px; flex: none; border: 1px solid #c4c4c4; background: #f4f4f4; box-sizing: border-box; border-radius: 2px; display: flex; align-items: center; justify-content: center; }
.half { background: radial-gradient(#eee 50%, #fff 50%); }
.fl { display: flex; align-items: center; height: 24px; padding-left: 43px; gap: 7px; color: #999; }
.disp-foot { position: absolute; left: 0; bottom: 0; right: 0; height: 39px; border-top: 1px solid #ddd; display: flex; align-items: center; color: #444; gap: 2px; padding-left: 1px; box-sizing: border-box; }
.box2 { width: 12px; height: 13px; border: 1px solid #999; border-radius: 2px; }

.status { height: 30px; flex: none; background: #fbfbfb; display: flex; align-items: center; position: relative; color: #444; }
.st { position: absolute; top: 8px; white-space: nowrap; }
.s1 { left: 2px; }
.s2 { left: 121px; }
.s3 { left: 262px; }
.s4 { left: 373px; }
.st-btns { position: absolute; left: 483px; top: 3px; display: flex; align-items: center; gap: 3px; }
.sbtn { height: 25px; border: 1px solid #c4c4c4; border-radius: 3px; box-sizing: border-box; display: flex; align-items: center; justify-content: center; gap: 2px; background: #fff; }
.sbtn.on { background: #d5e7fb; border-color: #5a9ff0; }
.sbtn .ic { width: 17px; height: 17px; }
.sbtn .caret { transform: scale(.8); }
.bright { margin: 0 8px 0 3px; white-space: nowrap; }
.round { width: 22px; }
.sym { width: 14px; height: 14px; border: 1px solid #4a78b8; border-radius: 50%; line-height: 12px; text-align: center; box-sizing: border-box; color: #2b6fd0; }
.slider { position: relative; width: 46px; height: 3px; margin: 0 -3px 0 0; background: #ccc; }
.slider i { position: absolute; right: 0; top: -9px; width: 8px; height: 21px; background: #eee; border: 1px solid #888; border-radius: 2px; box-sizing: border-box; }
.wall { height: 9px; flex: none; overflow: hidden; background: linear-gradient(90deg, #e8eadb, #f0e8d0 25%, #f8f0d8 40%, #e8ecdc 65%, #f0e4e0 85%, #eeeeee); position: relative; }
.wall span { position: absolute; left: 1815px; top: 5px; color: #222; }

.mark { position: absolute; border: 7px solid #ff3838; box-sizing: border-box; }
.m1 { left: 88px; top: 271px; width: 126px; height: 33px; }
.m2 { left: 87px; top: 321px; width: 129px; height: 30px; }
.mark-arrow { position: absolute; left: 0; top: 0; pointer-events: none; }

.sheetwin {
  position: absolute;
  left: 1632px;
  top: 173px;
  width: 288px;
  height: 841px;
  box-sizing: border-box;
  border: 5px solid #454c54;
  border-top-width: 6px;
  background: #fff;
  border-radius: 2px;
}
.sw-tools { position: relative; height: 28px; display: flex; align-items: center; padding: 1px 0 0 5px; white-space: nowrap; border-bottom: 1px solid #eee; box-sizing: border-box; }
.sw-t1 { margin-left: 2px; }
.sw-c1 { margin: 0 4px 0 6px; transform: scale(.8); }
.sw-t2 { margin-left: 3px; }
.sw-c2 { margin: 0 6px 0 6px; transform: scale(.8); }
.sw-t3 { margin-left: 3px; color: #aaa; }
.sw-more { top: 1px; right: 0; }
.stable { width: 277px; margin-left: 1px; }
.a { width: 125px; }
.b { width: 61px; }
.c { width: 62px; }
.stable th { text-align: center; color: #444; }
.stable th.clip { text-align: left; padding-left: 16px; }
.stable th, .stable td { border-left: 0; }
.stable td { padding-left: 3px; }
.stable tr.sel td { background: #d2e6fb; }
.stable td.root { padding-left: 2px; }
.minus { display: inline-block; width: 12px; height: 12px; border: 1px solid #777; box-sizing: border-box; border-radius: 1px; line-height: 9px; text-align: center; margin-right: 6px; vertical-align: -1px; }
.stable .child { position: relative; padding-left: 31px; }
.tl { position: absolute; left: 8px; top: -11px; width: 20px; height: 21px; border-left: 1px solid #d8d8d8; border-bottom: 1px solid #d8d8d8; box-sizing: border-box; }
.sw-bar { position: absolute; left: 0; right: 0; bottom: 2px; }
.sw-bar .thumb { left: 10px; width: 198px; }
.grip { position: absolute; left: 1908px; top: 625px; width: 9px; height: 59px; box-sizing: border-box; border: 1px solid #3a9cf0; border-radius: 2px; background: linear-gradient(#2c2f3a 0 8px, #19b860 8px, #28c870); box-shadow: -3px 0 5px rgba(0, 0, 0, .15); }
</style>
